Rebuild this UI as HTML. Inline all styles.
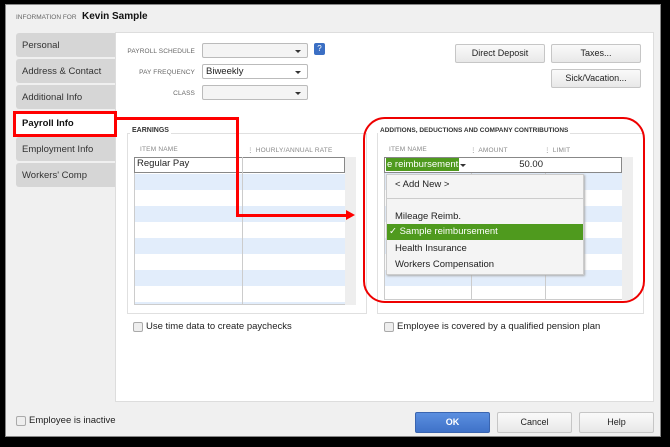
<!DOCTYPE html>
<html style="background:#000"><head><style>
*{margin:0;padding:0;box-sizing:border-box}
body{width:670px;height:447px;background:#000;position:relative;overflow:hidden;font-family:"Liberation Sans",Arial,sans-serif;font-size:9px;color:#222}
.a{position:absolute}
.frame{left:5px;top:4px;width:656px;height:433px;background:#f0f0f0;border:1px solid #888}
.panel{left:115px;top:32px;width:539px;height:370px;background:#fff;border:1px solid #ddd}
.tab{left:16px;width:99px;height:24px;background:#d6d6d6;border-radius:3px 0 0 3px;font-size:9.5px;padding:7px 0 0 6px;color:#333}
.lbl{font-size:6.5px;color:#666;text-align:right;letter-spacing:.1px}
.combo{width:106px;height:15px;background:#f4f4f4;border:1px solid #bbb;border-radius:2px;font-size:9.5px;padding:1px 3px}
.combo:after{content:"";position:absolute;right:6px;top:6px;border:3px solid transparent;border-top:3px solid #333}
.btn{height:19px;background:linear-gradient(#fafafa,#e8e8e8);border:1px solid #c6c6c6;border-radius:2px;text-align:center;font-size:9px;line-height:17px;color:#222}
.box{border:1px solid #e0e0e0;background:#fff}
.hdr{font-size:6.5px;color:#888;letter-spacing:.2px}
.cb{width:10px;height:10px;border:1px solid #aaa;background:#eee;border-radius:2px}
.t{font-size:9.5px}
</style></head><body>
<div class="a" style="left:0;top:0;width:670px;height:447px;background:#000"></div>
<div class="a frame"></div>
<div class="a" style="left:16px;top:14px;font-size:6.5px;color:#666">INFORMATION FOR</div>
<div class="a" style="left:82px;top:11px;font-size:10px;font-weight:bold;color:#111">Kevin Sample</div>
<div class="a panel"></div>
<div class="a tab" style="top:33px">Personal</div>
<div class="a tab" style="top:59px">Address &amp; Contact</div>
<div class="a tab" style="top:85px">Additional Info</div>
<div class="a tab" style="top:111px;background:#fff;font-weight:bold;color:#111">Payroll Info</div>
<div class="a tab" style="top:137px">Employment Info</div>
<div class="a tab" style="top:163px">Workers' Comp</div>

<div class="a lbl" style="left:110px;width:85px;top:48px">PAYROLL SCHEDULE</div>
<div class="a lbl" style="left:110px;width:85px;top:69px">PAY FREQUENCY</div>
<div class="a lbl" style="left:110px;width:85px;top:90px">CLASS</div>
<div class="a combo" style="left:202px;top:43px"></div>
<div class="a combo" style="left:202px;top:64px;background:#fff">Biweekly</div>
<div class="a combo" style="left:202px;top:85px"></div>
<div class="a" style="left:314px;top:43px;width:11px;height:12px;background:#3b6fc4;border-radius:2px;color:#fff;font-size:8px;text-align:center;line-height:12px">?</div>

<div class="a btn" style="left:455px;top:44px;width:90px">Direct Deposit</div>
<div class="a btn" style="left:551px;top:44px;width:90px">Taxes...</div>
<div class="a btn" style="left:551px;top:69px;width:90px">Sick/Vacation...</div>

<div class="a box" style="left:127px;top:133px;width:240px;height:181px"></div>
<div class="a" style="left:130px;top:127px;background:#fff;padding:0 2px;font-size:7px;font-weight:bold;color:#333">EARNINGS</div>
<div class="a hdr" style="left:140px;top:146px">ITEM NAME</div>
<div class="a hdr" style="left:247px;top:146px">⋮ HOURLY/ANNUAL RATE</div>
<div class="a" style="left:134px;top:157px;width:222px;height:148px;border:1px solid #ccc;background:repeating-linear-gradient(#e2edfb 0 16px,#fff 16px 32px);background-position:0 16px"></div>
<div class="a" style="left:134px;top:157px;width:211px;height:16px;background:#fff;border:1px solid #888"></div>
<div class="a t" style="left:137px;top:158px">Regular Pay</div>
<div class="a" style="left:242px;top:157px;width:1px;height:148px;background:#ccc"></div>
<div class="a" style="left:345px;top:157px;width:11px;height:148px;background:#eee"></div>

<div class="a box" style="left:377px;top:133px;width:267px;height:181px"></div>
<div class="a" style="left:378px;top:127px;background:#fff;padding:0 2px;font-size:6.5px;font-weight:bold;color:#333">ADDITIONS, DEDUCTIONS AND COMPANY CONTRIBUTIONS</div>
<div class="a hdr" style="left:389px;top:146px">ITEM NAME</div>
<div class="a hdr" style="left:470px;top:146px">⋮ AMOUNT</div>
<div class="a hdr" style="left:544px;top:146px">⋮ LIMIT</div>
<div class="a" style="left:384px;top:157px;width:249px;height:143px;border:1px solid #ccc;background:repeating-linear-gradient(#e2edfb 0 16px,#fff 16px 32px);background-position:0 16px"></div>
<div class="a" style="left:471px;top:157px;width:1px;height:143px;background:#ccc"></div>
<div class="a" style="left:545px;top:157px;width:1px;height:143px;background:#ccc"></div>
<div class="a" style="left:622px;top:157px;width:11px;height:143px;background:#eee"></div>
<div class="a" style="left:384px;top:157px;width:238px;height:16px;background:#fff;border:1px solid #888"></div>
<div class="a t" style="left:386px;top:158px;background:#4f9a1e;color:#fff;padding:0 1px;height:13px;line-height:13px">e reimbursement</div>
<div class="a" style="left:460px;top:164px;border:3px solid transparent;border-top:3px solid #333"></div>
<div class="a t" style="left:472px;top:159px;width:71px;text-align:right">50.00</div>
<div class="a" style="left:386px;top:174px;width:198px;height:101px;background:#f4f4f4;border:1px solid #ccc;box-shadow:1px 1px 2px #aaa"></div>
<div class="a t" style="left:395px;top:179px">&lt; Add New &gt;</div>
<div class="a" style="left:387px;top:198px;width:196px;height:1px;background:#ccc"></div>
<div class="a t" style="left:395px;top:211px">Mileage Reimb.</div>
<div class="a t" style="left:387px;top:224px;width:196px;height:16px;background:#4f9a1e;color:#fff;padding:2px 0 0 2px">✓ Sample reimbursement</div>
<div class="a t" style="left:395px;top:243px">Health Insurance</div>
<div class="a t" style="left:395px;top:259px">Workers Compensation</div>

<div class="a cb" style="left:133px;top:322px"></div>
<div class="a t" style="left:146px;top:321px">Use time data to create paychecks</div>
<div class="a cb" style="left:384px;top:322px"></div>
<div class="a t" style="left:397px;top:321px">Employee is covered by a qualified pension plan</div>

<div class="a cb" style="left:16px;top:416px"></div>
<div class="a t" style="left:29px;top:415px">Employee is inactive</div>
<div class="a btn" style="left:415px;top:412px;width:75px;height:21px;line-height:19px;background:linear-gradient(#5b8fe0,#3f72c8);border-color:#3a65b0;color:#fff;font-weight:bold">OK</div>
<div class="a btn" style="left:497px;top:412px;width:75px;height:21px;line-height:19px">Cancel</div>
<div class="a btn" style="left:579px;top:412px;width:75px;height:21px;line-height:19px">Help</div>

<div class="a" style="left:13px;top:111px;width:104px;height:26px;border:3px solid #f00"></div>
<div class="a" style="left:117px;top:117px;width:122px;height:3px;background:#f00"></div>
<div class="a" style="left:236px;top:117px;width:3px;height:100px;background:#f00"></div>
<div class="a" style="left:236px;top:214px;width:111px;height:3px;background:#f00"></div>
<div class="a" style="left:346px;top:210px;border:5px solid transparent;border-left:9px solid #f00;border-right:0"></div>
<div class="a" style="left:363px;top:117px;width:282px;height:186px;border:2px solid #e00;border-radius:22px"></div>
</body></html>
